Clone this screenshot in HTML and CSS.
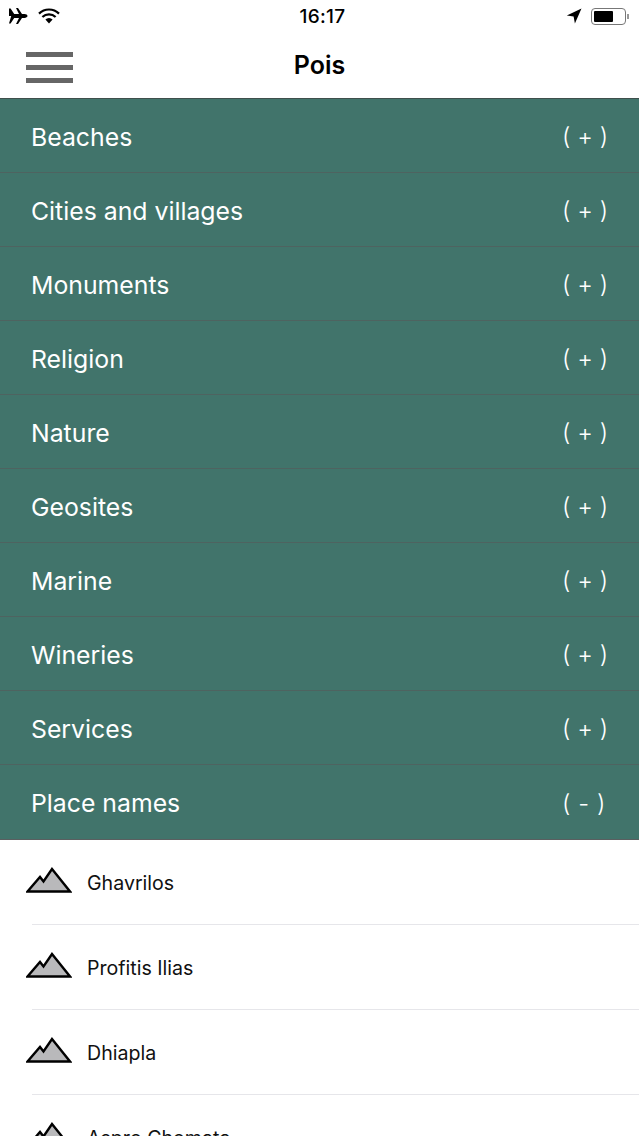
FILE: index.html
```html
<!DOCTYPE html>
<html lang="en">
<head>
  <meta charset="UTF-8">
  <meta name="viewport" content="width=device-width, initial-scale=1.0">
  <title>Pois</title>
  <link rel="stylesheet" href="styles.css">
</head>
<body>
  <div class="app">
    <div class="statusbar">
      <div class="status-left">
        <svg class="ico-plane" width="21" height="20" viewBox="0 0 21 20"><path d="M1 2.5h1.6l3.6 5.6h5.2l-.0 0h5.1c1.6 0 3 .9 3 1.9s-1.4 1.9-3 1.9h-5.1l-5.2 0-3.6 5.6H1l2.2-7.5-2.2 0 0 0z" fill="#000"/><path d="M8 2h2l4 6h-3zM8 18h2l4-6h-3z" fill="#000"/></svg>
        <svg class="ico-wifi" width="22" height="16" viewBox="0 0 22 16"><path d="M1 5.6a14.2 14.2 0 0 1 20 0" fill="none" stroke="#000" stroke-width="2.2"/><path d="M4.4 9a9.4 9.4 0 0 1 13.2 0" fill="none" stroke="#000" stroke-width="2.2"/><path d="M7.4 11.6a5 5 0 0 1 7.2 0L11 15.4z" fill="#000"/></svg>
      </div>
      <div class="status-time">16:17</div>
      <div class="status-right">
        <svg class="ico-loc" width="16" height="16" viewBox="0 0 16 16"><path d="M15.5 .5 .8 7.6l6.8.9 1.3 6.9z" fill="#000"/></svg>
        <div class="battery"><div class="battery-fill"></div></div>
        <div class="battery-tip"></div>
      </div>
    </div>

    <div class="navbar">
      <div class="burger"><span></span><span></span><span></span></div>
      <div class="nav-title">Pois</div>
    </div>

    <div class="categorie"><span>Beaches</span><span class="signe">( + )</span></div>
    <div class="categorie"><span>Cities and villages</span><span class="signe">( + )</span></div>
    <div class="categorie"><span>Monuments</span><span class="signe">( + )</span></div>
    <div class="categorie"><span>Religion</span><span class="signe">( + )</span></div>
    <div class="categorie"><span>Nature</span><span class="signe">( + )</span></div>
    <div class="categorie"><span>Geosites</span><span class="signe">( + )</span></div>
    <div class="categorie"><span>Marine</span><span class="signe">( + )</span></div>
    <div class="categorie"><span>Wineries</span><span class="signe">( + )</span></div>
    <div class="categorie"><span>Services</span><span class="signe">( + )</span></div>
    <div class="categorie ouverte"><span>Place names</span><span class="signe moins">( - )</span></div>

    <div class="lieu">
      <svg class="montagne" width="46" height="26" viewBox="0 0 46 26"><path d="M1.5 24.5 14 10l3.5 4.5L26 2l18 22.5z" fill="#b9b9bb" stroke="#000" stroke-width="2.4"/></svg>
      <span>Ghavrilos</span>
    </div>
    <div class="lieu">
      <svg class="montagne" width="46" height="26" viewBox="0 0 46 26"><path d="M1.5 24.5 14 10l3.5 4.5L26 2l18 22.5z" fill="#b9b9bb" stroke="#000" stroke-width="2.4"/></svg>
      <span>Profitis Ilias</span>
    </div>
    <div class="lieu">
      <svg class="montagne" width="46" height="26" viewBox="0 0 46 26"><path d="M1.5 24.5 14 10l3.5 4.5L26 2l18 22.5z" fill="#b9b9bb" stroke="#000" stroke-width="2.4"/></svg>
      <span>Dhiapla</span>
    </div>
    <div class="lieu">
      <svg class="montagne" width="46" height="26" viewBox="0 0 46 26"><path d="M1.5 24.5 14 10l3.5 4.5L26 2l18 22.5z" fill="#b9b9bb" stroke="#000" stroke-width="2.4"/></svg>
      <span>Aspro Chomata</span>
    </div>
  </div>
</body>
</html>
```

FILE: styles.css
```css
html, body {
  margin: 0;
  height: 100%;
  overflow: hidden;
}
body {
  background-color: #fff;
  font-family: Inter, "Noto Sans", sans-serif;
  color: #000;
}
.app {
  width: 639px;
  height: 1136px;
  overflow: hidden;
}
.statusbar {
  display: flex;
  justify-content: space-between;
  align-items: center;
  height: 32px;
  padding: 0 8px;
  position: relative;
}
.status-left {
  display: flex;
  align-items: center;
  gap: 9px;
}
.status-time {
  font-size: 19px;
  font-weight: 500;
  letter-spacing: 0.3px;
  position: absolute;
  left: 6px;
  right: 0;
  text-align: center;
}
.status-right {
  display: flex;
  align-items: center;
  padding-right: 5px;
}
.ico-loc {
  margin-right: 9px;
}
.battery {
  width: 35px;
  height: 17px;
  border: 1px solid #777;
  border-radius: 4px;
  padding: 2px;
  box-sizing: border-box;
  display: flex;
}
.battery-fill {
  width: 19px;
  background-color: #000;
  border-radius: 1px;
}
.battery-tip {
  width: 2px;
  height: 5px;
  background-color: #999;
  margin-left: 1px;
  margin-right: -3px;
}
.navbar {
  display: flex;
  align-items: center;
  justify-content: center;
  height: 66px;
  position: relative;
  border-bottom: 1px solid #3f4f4c;
}
.burger {
  position: absolute;
  left: 26px;
  top: 20px;
  width: 47px;
  display: flex;
  flex-direction: column;
  gap: 8px;
}
.burger span {
  height: 5px;
  background-color: #666;
}
.nav-title {
  font-size: 25px;
  font-weight: 600;
}
.categorie {
  display: flex;
  justify-content: space-between;
  align-items: center;
  box-sizing: border-box;
  height: 74px;
  padding: 2px 31px 0;
  background-color: #41746b;
  color: #fff;
  font-size: 24.8px;
  border-bottom: 1px solid #4e6360;
}
.categorie.ouverte {
  height: 75px;
  border-bottom-color: #5a5f60;
}
.signe {
  font-size: 24px;
  font-weight: 300;
  white-space: pre;
}
.signe.moins {
  margin-right: 2px;
  letter-spacing: 0.6px;
}
.lieu {
  display: flex;
  align-items: center;
  box-sizing: border-box;
  height: 85px;
  padding-top: 2px;
  margin-left: 32px;
  font-size: 19.6px;
  color: #111;
  border-bottom: 1px solid #e6e6ea;
}
.montagne {
  margin-left: -6px;
  margin-right: 15px;
  margin-top: -7px;
  flex-shrink: 0;
}
```
